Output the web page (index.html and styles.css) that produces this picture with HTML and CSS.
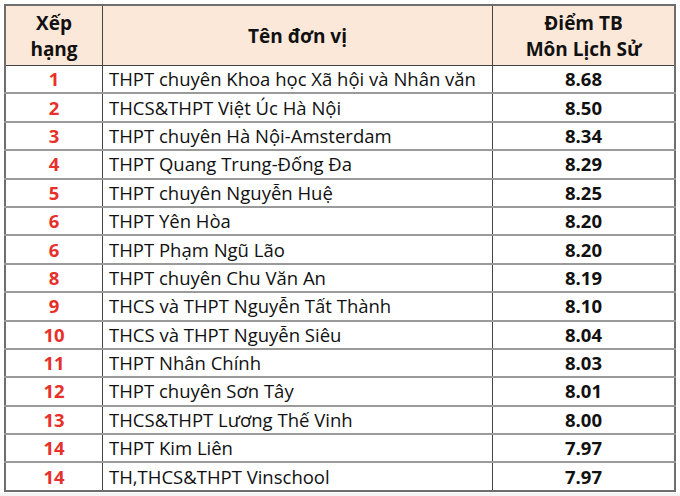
FILE: index.html
```html
<!DOCTYPE html>
<html lang="vi">
<head>
<meta charset="utf-8">
<link rel="stylesheet" href="styles.css">
</head>
<body>
<div class="page">
<table class="rank">
<thead>
<tr><th class="c1">Xếp<br>hạng</th><th class="c2">Tên đơn vị</th><th class="c3">Điểm TB<br>Môn Lịch Sử</th></tr>
</thead>
<tbody>
<tr><td class="rk">1</td><td class="nm">THPT chuyên Khoa học Xã hội và Nhân văn</td><td class="sc">8.68</td></tr>
<tr><td class="rk">2</td><td class="nm">THCS&amp;THPT Việt Úc Hà Nội</td><td class="sc">8.50</td></tr>
<tr><td class="rk">3</td><td class="nm">THPT chuyên Hà Nội-Amsterdam</td><td class="sc">8.34</td></tr>
<tr><td class="rk">4</td><td class="nm">THPT Quang Trung-Đống Đa</td><td class="sc">8.29</td></tr>
<tr><td class="rk">5</td><td class="nm">THPT chuyên Nguyễn Huệ</td><td class="sc">8.25</td></tr>
<tr><td class="rk">6</td><td class="nm">THPT Yên Hòa</td><td class="sc">8.20</td></tr>
<tr><td class="rk">6</td><td class="nm">THPT Phạm Ngũ Lão</td><td class="sc">8.20</td></tr>
<tr><td class="rk">8</td><td class="nm">THPT chuyên Chu Văn An</td><td class="sc">8.19</td></tr>
<tr><td class="rk">9</td><td class="nm">THCS và THPT Nguyễn Tất Thành</td><td class="sc">8.10</td></tr>
<tr><td class="rk">10</td><td class="nm">THCS và THPT Nguyễn Siêu</td><td class="sc">8.04</td></tr>
<tr><td class="rk">11</td><td class="nm">THPT Nhân Chính</td><td class="sc">8.03</td></tr>
<tr><td class="rk">12</td><td class="nm">THPT chuyên Sơn Tây</td><td class="sc">8.01</td></tr>
<tr><td class="rk">13</td><td class="nm">THCS&amp;THPT Lương Thế Vinh</td><td class="sc">8.00</td></tr>
<tr><td class="rk">14</td><td class="nm">THPT Kim Liên</td><td class="sc">7.97</td></tr>
<tr><td class="rk">14</td><td class="nm">TH,THCS&amp;THPT Vinschool</td><td class="sc">7.97</td></tr>
</tbody>
</table>
</div>
</body>
</html>
```
FILE: styles.css
```css
html { background: #f4f4f4; }
body { margin: 0; font-family: "Open Sans", Lato, sans-serif; color: #111; }
.page { background: #fff; padding: 4px 4px 1px 4px; }
.rank {
  width: 672px;
  border-collapse: collapse;
  table-layout: fixed;
  border: 2px solid #6e6e6e;
}
.rank th {
  background: #fce8d8;
  font-weight: 700;
  font-size: 19px;
  line-height: 26px;
  height: 59px;
  padding: 0;
  text-align: center;
  border-bottom: 1px solid #444;
  border-left: 1px solid #444;
}
.rank th.c1 { width: 96px; border-left: none; }
.rank th.c2 { width: 389px; }
.rank td {
  height: 26.4px;
  padding: 0;
  font-size: 18.5px;
  line-height: 24px;
  border-top: 2px solid #9a9a9a;
  border-left: 1px solid #444;
}
.rank tbody tr:first-child td { border-top: 1px solid #444; }
.rank td.rk { text-align: center; color: #e8302a; font-weight: 700; border-left: none; }
.rank td.nm { padding-left: 6px; }
.rank td.sc { text-align: center; font-weight: 700; }
```
